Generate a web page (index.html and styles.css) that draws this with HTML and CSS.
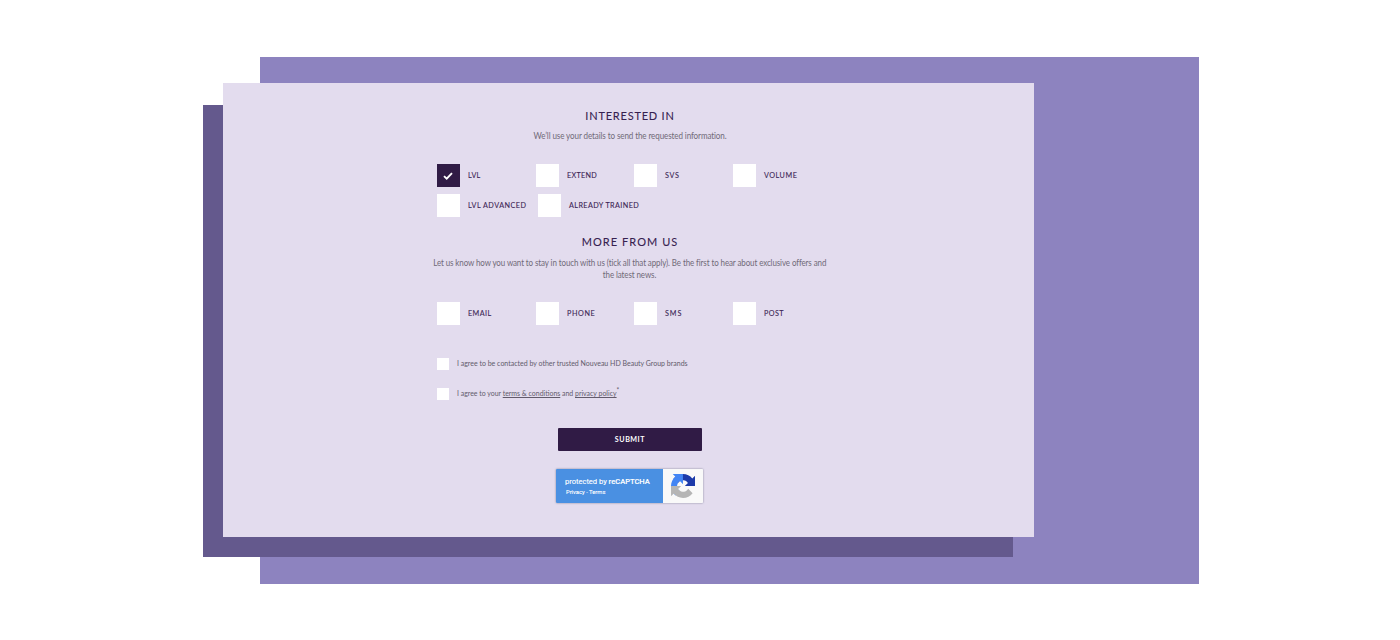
FILE: index.html
```html
<!DOCTYPE html>
<html lang="en">
<head>
<meta charset="utf-8">
<title>Interested in</title>
<link rel="stylesheet" href="styles.css">
</head>
<body>
<div class="stage">
  <div class="backdrop"></div>
  <div class="shade"></div>
  <main class="card">
    <form class="form">
      <h2 class="title title-interest">INTERESTED IN</h2>
      <p class="intro intro-interest">We’ll use your details to send the requested information.</p>
      <div class="options">
        <label class="option"><span class="box checked"><svg class="tick" viewBox="0 0 10 8"><path d="M1 4.1 3.7 6.6 9 1.2"/></svg></span><span class="name n-lvl">LVL</span></label>
        <label class="option"><span class="box"></span><span class="name n-extend">EXTEND</span></label>
        <label class="option"><span class="box"></span><span class="name n-svs">SVS</span></label>
        <label class="option"><span class="box"></span><span class="name n-volume">VOLUME</span></label>
      </div>
      <div class="options second">
        <label class="option wide"><span class="box"></span><span class="name n-adv">LVL ADVANCED</span></label>
        <label class="option wide"><span class="box"></span><span class="name n-trained">ALREADY TRAINED</span></label>
      </div>
      <h2 class="title title-more">MORE FROM US</h2>
      <p class="intro intro-more"><span class="line line-one">Let us know how you want to stay in touch with us (tick all that apply). Be the first to hear about exclusive offers and</span><span class="line">the latest news.</span></p>
      <div class="options">
        <label class="option"><span class="box"></span><span class="name n-email">EMAIL</span></label>
        <label class="option"><span class="box"></span><span class="name n-phone">PHONE</span></label>
        <label class="option"><span class="box"></span><span class="name n-sms">SMS</span></label>
        <label class="option"><span class="box"></span><span class="name n-post">POST</span></label>
      </div>
      <label class="agree"><span class="minibox"></span><span class="agree-text">I agree to be contacted by other trusted Nouveau HD Beauty Group brands</span></label>
      <label class="agree agree-last"><span class="minibox"></span><span class="agree-text">I agree to your <u>terms &amp; conditions</u> and <u>privacy policy</u><sup class="star">*</sup></span></label>
      <button class="submit" type="button"><span class="submit-text">SUBMIT</span></button>
      <div class="captcha">
        <div class="captcha-text">
          <div class="protected">protected by <b>reCAPTCHA</b></div>
          <div class="links">Privacy - Terms</div>
        </div>
        <div class="captcha-logo">
          <svg class="logo" viewBox="0 0 64 64">
            <path fill="#1c3aa9" d="M64 31.955l-.002-1.377V4.687l-7.158 7.158C50.982 4.674 42.033.093 32.015.093c-10.425 0-19.687 4.958-25.529 12.637l11.733 11.856a15.55 15.55 0 0 1 4.754-5.334c2.05-1.6 4.952-2.906 9.04-2.906.494 0 .875.058 1.155.166 5.065.4 9.455 3.195 12.04 7.252l-8.305 8.305z"/>
            <path fill="#4285f4" d="M31.862.094l-1.377.002H4.594l7.158 7.158C4.58 13.112 0 22.06 0 32.08c0 10.426 4.958 19.688 12.637 25.53l11.856-11.733a15.55 15.55 0 0 1-5.334-4.754c-1.6-2.05-2.906-4.952-2.906-9.04 0-.494.058-.875.166-1.155.4-5.065 3.195-9.455 7.252-12.04l8.305 8.305z"/>
            <path fill="#b5b5b5" d="M.093 31.957l.002 1.377v25.891l7.158-7.158c5.858 7.171 14.807 11.752 24.825 11.752 10.426 0 19.688-4.958 25.53-12.637L45.875 39.326a15.55 15.55 0 0 1-4.754 5.334c-2.05 1.6-4.952 2.906-9.04 2.906-.494 0-.875-.058-1.155-.166-5.065-.4-9.455-3.195-12.04-7.252l8.305-8.305z"/>
          </svg>
        </div>
      </div>
    </form>
  </main>
</div>
</body>
</html>
```

FILE: styles.css
```css
* { box-sizing: border-box; }
body { margin: 0; background: #fff; font-family: Lato, "Liberation Sans", sans-serif; }
.stage { position: relative; width: 1400px; height: 640px; overflow: hidden; }

/* Overlapping colour panels */
.backdrop { position: absolute; left: 260px; top: 57px; width: 939px; height: 527px; background: #8d83bf; }
.shade { position: absolute; left: 203px; top: 105px; width: 810px; height: 452px; background: #64598d; }
.card { position: absolute; left: 223px; top: 83px; width: 811px; height: 454px; padding-top: 24px; background: #e3dcee; }

.form { width: 394px; margin-left: 209.500px; display: flex; flex-direction: column; }
.title { margin: 0; height: 17px; line-height: 17px; font-size: 12.200px; font-weight: 400; color: #36204f; text-align: center; white-space: nowrap; transform: scaleX(0.9); -webkit-text-stroke: 0.100px #36204f; }
.title-interest { letter-spacing: 0.9px; }
.title-more { letter-spacing: 1.200px; margin-top: 16px; }
.intro { margin: 0; line-height: 11.500px; font-size: 8.500px; letter-spacing: -0.1px; color: #706a78; text-align: center; white-space: nowrap; }
.intro-interest { margin-top: 7px; height: 12px; transform: scaleX(0.945); }
.intro-more { margin-top: 8px; height: 23px; display: flex; flex-direction: column; align-items: center; }
.line { transform: scaleX(0.937); }

.options { display: grid; grid-template-columns: repeat(4, 98.700px); height: 23px; margin: 21px 0 0 4.500px; }
.second { display: flex; margin-top: 7px; }
.wide { width: 100.500px; }
.option { display: flex; align-items: center; gap: 8px; }
.box { width: 23px; height: 23px; flex: none; background: #fff; display: flex; align-items: center; justify-content: center; }
.checked { background: #301b45; }
.tick { width: 10px; height: 8px; margin-right: 1px; fill: none; stroke: #fff; stroke-width: 1.900; }
.name { font-size: 8px; line-height: 12px; padding-bottom: 2px; color: #3b2554; -webkit-text-stroke: 0.100px #3b2554; white-space: nowrap; transform: scaleX(0.9); transform-origin: left; }
.n-lvl { letter-spacing: 0.350px; }
.n-extend { letter-spacing: 0.350px; }
.n-svs { letter-spacing: 0.8px; }
.n-volume { letter-spacing: 0.6px; }
.n-adv { letter-spacing: 0.550px; }
.n-trained { letter-spacing: 0.460px; }
.n-email { letter-spacing: 0.5px; }
.n-phone { letter-spacing: 0.7px; }
.n-sms { letter-spacing: 1px; }
.n-post { letter-spacing: 0.5px; }

.agree { display: flex; align-items: center; gap: 8px; height: 12px; margin: 33px 0 0 4.500px; font-size: 7.500px; line-height: 12px; color: #625b6b; white-space: nowrap; }
.agree-last { margin-top: 18px; }
.agree-text { transform: scaleX(0.933); transform-origin: left; }
.agree-last .agree-text { transform: scaleX(0.925); }
.minibox { width: 12px; height: 12px; background: #fff; flex: none; }
.star { font-size: 7px; line-height: 0; vertical-align: 3px; }

.submit { align-self: center; width: 144px; height: 23px; margin: 28px 0 0; padding: 0; border: 0; border-radius: 1px; background: #301b45; color: #fff; font: 700 8px/23px Lato, sans-serif; letter-spacing: 0.6px; }
.submit-text { display: inline-block; transform: scaleX(0.89); }
.captcha { align-self: center; display: flex; width: 147px; height: 34px; margin-top: 18px; border-radius: 1px; box-shadow: 0 0 2px #77758c; font-family: Roboto, sans-serif; color: #fff; overflow: hidden; }
.captcha-text { width: 107px; padding: 7px 0 0 9px; background: #4a90e2; white-space: nowrap; }
.protected { font-size: 7.600px; line-height: 11px; letter-spacing: -0.030px; -webkit-text-stroke: 0.100px #fff; }
.protected b { font-weight: 500; }
.links { font-size: 5.800px; line-height: 8px; margin-top: 1px; padding-left: 1px; -webkit-text-stroke: 0.100px #fff; }
.captcha-logo { flex: 1; display: flex; align-items: center; justify-content: center; background: #f9f9f9; }
.logo { width: 24px; height: 24px; }
```
